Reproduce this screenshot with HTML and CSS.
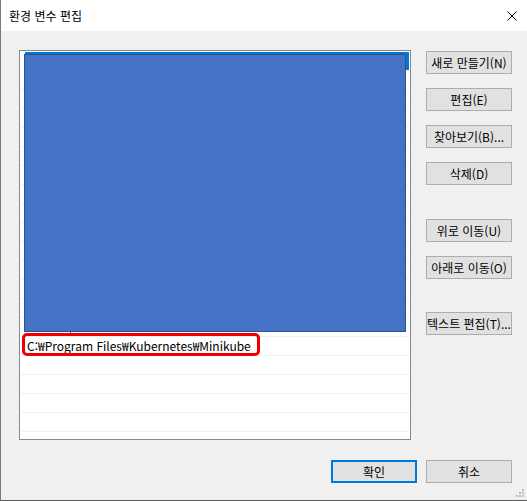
FILE: index.html
```html
<!DOCTYPE html>
<html lang="ko">
<head>
    <meta charset="UTF-8">
    <title>환경 변수 편집</title>
    <link rel="stylesheet" href="styles.css">
</head>
<body>
    <div class="window">
        <div class="titlebar">
            <span class="title">환경 변수 편집</span>
            <svg class="close" width="10" height="10" viewBox="0 0 10 10">
                <path d="M0.5 0.5 L9.5 9.5 M9.5 0.5 L0.5 9.5" stroke="#000" stroke-width="1" fill="none"/>
            </svg>
        </div>
        <div class="content">
            <div class="main">
                <div class="list">
                    <div class="row selected"></div>
                    <div class="row"></div>
                    <div class="row"></div>
                    <div class="row"></div>
                    <div class="row"></div>
                    <div class="row"></div>
                    <div class="row"></div>
                    <div class="row"></div>
                    <div class="row"></div>
                    <div class="row"></div>
                    <div class="row"></div>
                    <div class="row"></div>
                    <div class="row"></div>
                    <div class="row"></div>
                    <div class="row"></div>
                    <div class="row">C:₩Program Files₩Kubernetes₩Minikube</div>
                    <div class="row"></div>
                    <div class="row"></div>
                    <div class="row"></div>
                    <div class="row"></div>
                    <!-- 가림 처리 + 강조 표시 -->
                    <div class="redact"></div>
                    <div class="tick"></div>
                    <div class="callout"></div>
                </div>
                <div class="side">
                    <button class="btn">새로 만들기(N)</button>
                    <button class="btn gap-s">편집(E)</button>
                    <button class="btn gap-s">찾아보기(B)...</button>
                    <button class="btn gap-s">삭제(D)</button>
                    <button class="btn gap-l">위로 이동(U)</button>
                    <button class="btn gap-s">아래로 이동(O)</button>
                    <button class="btn gap-l2">텍스트 편집(T)...</button>
                </div>
            </div>
            <div class="footer">
                <button class="btn default">확인</button>
                <button class="btn">취소</button>
            </div>
        </div>
        <svg class="grip" width="8" height="8" viewBox="0 0 8 8">
            <rect x="6" y="0" width="2" height="2" fill="#bcbcbc"/>
            <rect x="3" y="3" width="2" height="2" fill="#bcbcbc"/>
            <rect x="6" y="3" width="2" height="2" fill="#bcbcbc"/>
            <rect x="0" y="6" width="2" height="2" fill="#bcbcbc"/>
            <rect x="3" y="6" width="2" height="2" fill="#bcbcbc"/>
            <rect x="6" y="6" width="2" height="2" fill="#bcbcbc"/>
        </svg>
    </div>
</body>
</html>
```

FILE: styles.css
```css
body {
    margin: 0;
    padding: 0;
    font-family: "Noto Sans CJK KR", "Noto Sans", sans-serif;
    font-size: 12px;
    color: #000;
}
.window {
    position: relative;
    width: 527px;
    height: 501px;
    box-sizing: border-box;
    border-left: 1px solid #7a7a7a;
    border-bottom: 1px solid #5a5a5a;
    background-color: #f0f0f0;
    display: flex;
    flex-direction: column;
}
.titlebar {
    height: 31px;
    background-color: #fff;
    display: flex;
    align-items: center;
    justify-content: space-between;
    padding: 0 10px 0 8px;
}
.title {
    line-height: 16px;
}
.close {
    display: block;
}
.content {
    padding: 19px 15px 0 18px;
}
.main {
    display: flex;
    align-items: flex-start;
}
.list {
    position: relative;
    width: 392px;
    height: 390px;
    box-sizing: border-box;
    border: 1px solid #828790;
    background-color: #fff;
    padding: 1px;
    overflow: hidden;
}
.row {
    height: 18px;
    line-height: 18px;
    border-bottom: 1px solid #f0f0f0;
    padding-left: 6px;
    white-space: nowrap;
}
.row.selected {
    border-left: 4px solid #fff;
    padding-left: 2px;
    background-color: #0078d7;
}
.redact {
    position: absolute;
    left: 4px;
    top: 3px;
    width: 382px;
    height: 278px;
    box-sizing: border-box;
    background-color: #4472c4;
    border: 1px solid #2f528f;
}
.tick {
    position: absolute;
    left: 50px;
    top: 280px;
    width: 1px;
    height: 4px;
    background-color: #2f528f;
}
.callout {
    position: absolute;
    left: 2px;
    top: 282px;
    width: 238px;
    height: 23px;
    box-sizing: border-box;
    border: 3px solid #ee0000;
    border-radius: 5px;
}
.side {
    margin-left: 15px;
    padding-top: 1px;
    display: flex;
    flex-direction: column;
}
.btn {
    width: 86px;
    height: 23px;
    box-sizing: border-box;
    padding: 0;
    margin: 0;
    border: 1px solid #adadad;
    background-color: #e1e1e1;
    font-family: inherit;
    font-size: 12px;
    line-height: 21px;
    color: #000;
    white-space: nowrap;
    text-align: center;
}
.btn.gap-s {
    margin-top: 14px;
}
.btn.gap-l {
    margin-top: 34px;
}
.btn.gap-l2 {
    margin-top: 33px;
}
.btn.default {
    border: 2px solid #0078d7;
    line-height: 19px;
}
.footer {
    margin-top: 20px;
    display: flex;
    justify-content: flex-end;
    gap: 9px;
}
.grip {
    position: absolute;
    right: 3px;
    bottom: 3px;
}
```
